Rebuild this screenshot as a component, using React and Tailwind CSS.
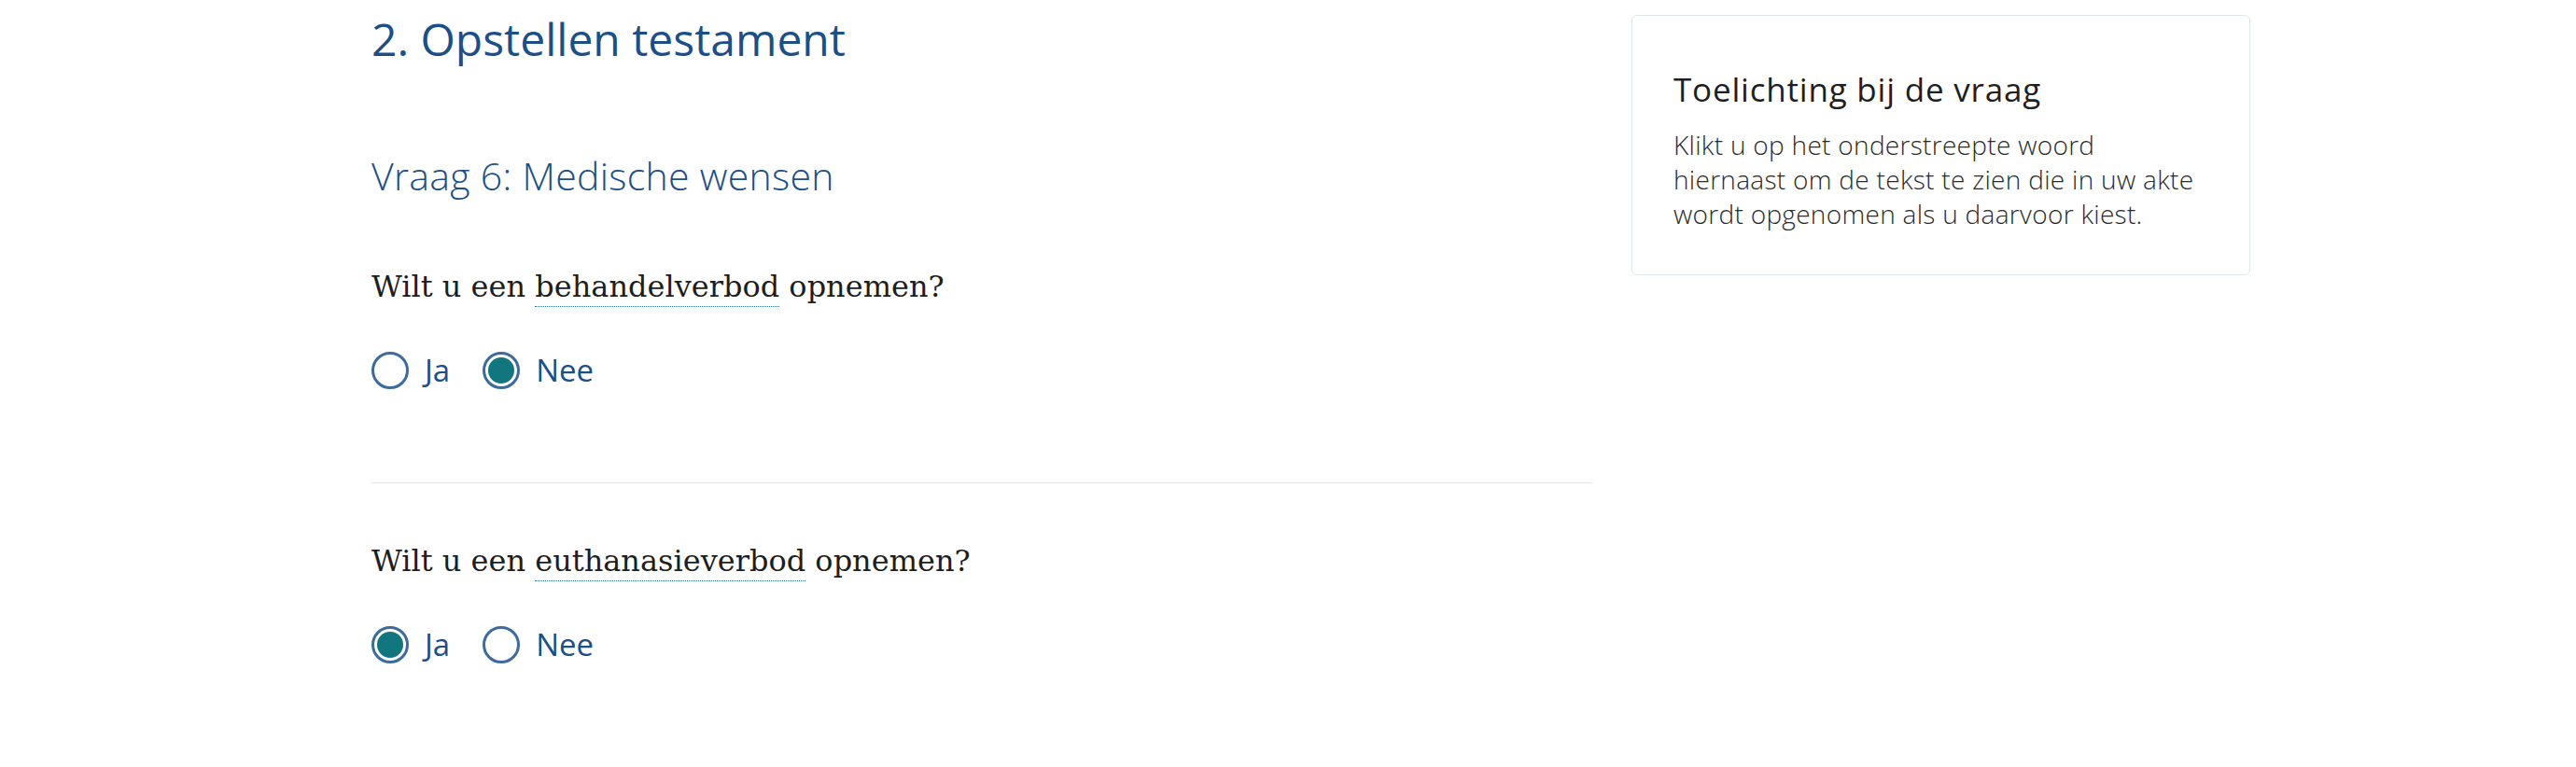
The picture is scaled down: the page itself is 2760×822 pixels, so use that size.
import { useState } from 'react';

const blue = 'text-[#1c4f86]';

function Radio({ label, checked, onChange }) {
  return (
    <label className="flex items-center gap-[17px] cursor-pointer">
      <span className="w-[40px] h-[40px] rounded-full border-[3px] border-[#3d6b9e] bg-white flex items-center justify-center">
        {checked && <span className="w-[28px] h-[28px] rounded-full bg-[#12767f]" />}
      </span>
      <input type="radio" className="hidden" checked={checked} onChange={onChange} />
      <span className={`font-['Open_Sans',sans-serif] font-medium text-[33px] leading-[40px] ${blue}`}>{label}</span>
    </label>
  );
}

function Question({ word, value, setValue }) {
  return (
    <div>
      <p className="font-['DejaVu_Serif',serif] text-[32px] leading-[40px] text-[#1e1e1e]">
        Wilt u een{' '}
        <span className="border-b border-dotted border-[#2f6aa3] pb-[2px] cursor-pointer">{word}</span>{' '}
        opnemen?
      </p>
      <div className="flex items-center gap-[35px] mt-[50px]">
        <Radio label="Ja" checked={value === 'ja'} onChange={() => setValue('ja')} />
        <Radio label="Nee" checked={value === 'nee'} onChange={() => setValue('nee')} />
      </div>
    </div>
  );
}

export default function App() {
  const [behandel, setBehandel] = useState('nee');
  const [euthanasie, setEuthanasie] = useState('ja');

  return (
    <div className="min-h-[822px] bg-white flex items-start gap-[42px] pl-[398px]">
      <main className="w-[1308px] pt-[13px]">
        <h1 className={`font-['Open_Sans',sans-serif] font-medium text-[48px] leading-[58px] ${blue}`}>
          2. Opstellen testament
        </h1>
        <h2 className={`mt-[92px] font-['Open_Sans',sans-serif] font-light text-[41px] leading-[50px] tracking-[0.3px] ${blue}`}>
          Vraag 6: Medische wensen
        </h2>

        <div className="mt-[74px]">
          <Question word="behandelverbod" value={behandel} setValue={setBehandel} />
        </div>

        <hr className="mt-[100px] border-0 border-t border-[#dfe5ec]" />

        <div className="mt-[63px]">
          <Question word="euthanasieverbod" value={euthanasie} setValue={setEuthanasie} />
        </div>
      </main>

      {/* Toelichting */}
      <aside className="w-[663px] mt-[16px] border border-[#dfe6ee] rounded-md pl-[44px] pr-[45px] pt-[57px] pb-[46px]">
        <h3 className="font-['Open_Sans',sans-serif] font-medium text-[35px] leading-[44px] tracking-[0.8px] text-[#1f1f1f]">
          Toelichting bij de vraag
        </h3>
        <p className="mt-[19px] font-['Open_Sans',sans-serif] font-light text-[28px] leading-[37px] tracking-[0.3px] text-[#2b2b2b]">
          Klikt u op het onderstreepte woord hiernaast om de tekst te zien die in uw akte wordt opgenomen als u
          daarvoor kiest.
        </p>
      </aside>
    </div>
  );
}
